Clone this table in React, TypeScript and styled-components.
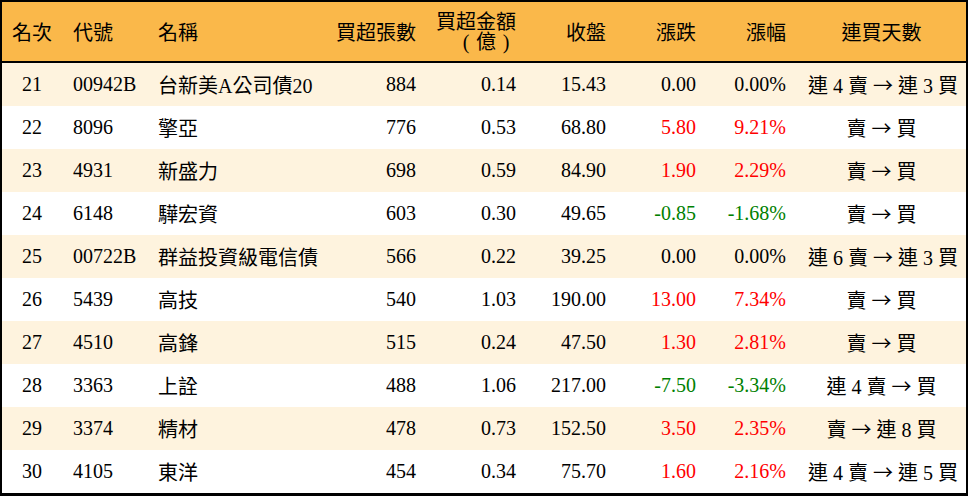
import React from 'react';
import styled, { createGlobalStyle } from 'styled-components';

type Trend = 'up' | 'down' | 'flat';

type Row = {
  rank: number;
  code: string;
  name: string;
  lots: number;
  amount: string;
  close: string;
  change: string;
  pct: string;
  sold: string;
  bought: string;
  trend: Trend;
};

const rows: Row[] = [
  { rank: 21, code: '00942B', name: '台新美A公司債20', lots: 884, amount: '0.14', close: '15.43', change: '0.00', pct: '0.00%', sold: '連 4 賣', bought: '連 3 買', trend: 'flat' },
  { rank: 22, code: '8096', name: '擎亞', lots: 776, amount: '0.53', close: '68.80', change: '5.80', pct: '9.21%', sold: '賣', bought: '買', trend: 'up' },
  { rank: 23, code: '4931', name: '新盛力', lots: 698, amount: '0.59', close: '84.90', change: '1.90', pct: '2.29%', sold: '賣', bought: '買', trend: 'up' },
  { rank: 24, code: '6148', name: '驊宏資', lots: 603, amount: '0.30', close: '49.65', change: '-0.85', pct: '-1.68%', sold: '賣', bought: '買', trend: 'down' },
  { rank: 25, code: '00722B', name: '群益投資級電信債', lots: 566, amount: '0.22', close: '39.25', change: '0.00', pct: '0.00%', sold: '連 6 賣', bought: '連 3 買', trend: 'flat' },
  { rank: 26, code: '5439', name: '高技', lots: 540, amount: '1.03', close: '190.00', change: '13.00', pct: '7.34%', sold: '賣', bought: '買', trend: 'up' },
  { rank: 27, code: '4510', name: '高鋒', lots: 515, amount: '0.24', close: '47.50', change: '1.30', pct: '2.81%', sold: '賣', bought: '買', trend: 'up' },
  { rank: 28, code: '3363', name: '上詮', lots: 488, amount: '1.06', close: '217.00', change: '-7.50', pct: '-3.34%', sold: '連 4 賣', bought: '買', trend: 'down' },
  { rank: 29, code: '3374', name: '精材', lots: 478, amount: '0.73', close: '152.50', change: '3.50', pct: '2.35%', sold: '賣', bought: '連 8 買', trend: 'up' },
  { rank: 30, code: '4105', name: '東洋', lots: 454, amount: '0.34', close: '75.70', change: '1.60', pct: '2.16%', sold: '連 4 賣', bought: '連 5 買', trend: 'up' },
];

const trendColor: Record<Trend, string> = {
  up: '#ff0000',
  down: '#008000',
  flat: '#000000',
};

const GlobalStyle = createGlobalStyle`
  html, body {
    margin: 0;
    padding: 0;
    background: #ffffff;
  }
  * {
    box-sizing: border-box;
  }
`;

const columns = '60px 85px 183px 97px 100px 90px 90px 90px 1fr';

const Board = styled.div`
  width: 968px;
  height: 496px;
  border: 2px solid #000;
  border-bottom-width: 3px;
  font-family: 'Liberation Serif', 'Noto Sans CJK TC', serif;
  font-size: 20px;
  color: #000;
  overflow: hidden;
`;

const HeaderRow = styled.div`
  display: grid;
  grid-template-columns: ${columns};
  height: 61px;
  background: #fab84a;
  border-bottom: 2px solid #000;
`;

const DataRow = styled.div<{ $striped: boolean }>`
  display: grid;
  grid-template-columns: ${columns};
  height: 43px;
  background: ${(p) => (p.$striped ? '#fef3de' : '#ffffff')};
`;

const Cell = styled.div<{ $align?: 'left' | 'right' | 'center'; $color?: string }>`
  display: flex;
  flex-direction: column;
  justify-content: center;
  align-items: ${(p) =>
    p.$align === 'right' ? 'flex-end' : p.$align === 'center' ? 'center' : 'flex-start'};
  text-align: ${(p) => p.$align || 'left'};
  padding: 0 11px;
  white-space: nowrap;
  color: ${(p) => p.$color || 'inherit'};
`;

const HeadLine = styled.span`
  line-height: 20px;
`;

const Paren = styled.span`
  display: inline-block;
  width: 20px;
  text-align: center;
  font-family: 'Liberation Serif', serif;
`;

const Arrow = styled.span`
  font-family: 'Noto Sans CJK TC', sans-serif;
`;

export default function App() {
  return (
    <>
      <GlobalStyle />
      <Board>
        <HeaderRow>
          <Cell $align="center">名次</Cell>
          <Cell>代號</Cell>
          <Cell>名稱</Cell>
          <Cell $align="right">買超張數</Cell>
          <Cell $align="right">
            <HeadLine>買超金額</HeadLine>
            <HeadLine>
              <Paren>(</Paren>億<Paren>)</Paren>
            </HeadLine>
          </Cell>
          <Cell $align="right">收盤</Cell>
          <Cell $align="right">漲跌</Cell>
          <Cell $align="right">漲幅</Cell>
          <Cell $align="center">連買天數</Cell>
        </HeaderRow>
        {rows.map((r, i) => (
          <DataRow key={r.rank} $striped={i % 2 === 0}>
            <Cell $align="center">{r.rank}</Cell>
            <Cell>{r.code}</Cell>
            <Cell>{r.name}</Cell>
            <Cell $align="right">{r.lots}</Cell>
            <Cell $align="right">{r.amount}</Cell>
            <Cell $align="right">{r.close}</Cell>
            <Cell $align="right" $color={trendColor[r.trend]}>{r.change}</Cell>
            <Cell $align="right" $color={trendColor[r.trend]}>{r.pct}</Cell>
            <Cell $align="center">
              <span>
                {r.sold} <Arrow>→</Arrow> {r.bought}
              </span>
            </Cell>
          </DataRow>
        ))}
      </Board>
    </>
  );
}
